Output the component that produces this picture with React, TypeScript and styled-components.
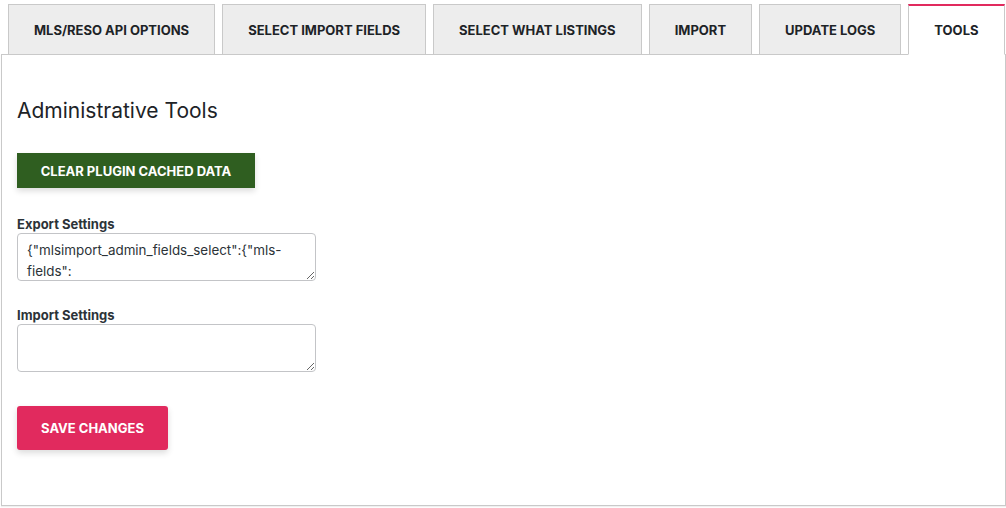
import React from "react";
import styled, { createGlobalStyle } from "styled-components";

const GlobalStyle = createGlobalStyle`
  html, body { margin: 0; padding: 0; background: #ffffff; }
  body { font-family: Inter, "Noto Sans", sans-serif; color: #1d2327; }
  * { box-sizing: border-box; }
`;

const Wrapper = styled.div`
  width: 1006px;
  height: 508px;
  padding: 4px 0 0 1px;
  display: flex;
  flex-direction: column;
  background: #ffffff;
`;

const TabBar = styled.nav`
  display: flex;
  padding-left: 7px;
  gap: 7px;
  margin-bottom: -1px;
  position: relative;
  z-index: 1;
`;

const Tab = styled.div<{ $active?: boolean }>`
  height: 51px;
  padding: 0 25px;
  display: flex;
  align-items: center;
  justify-content: center;
  font-family: Inter, sans-serif;
  font-size: 13px;
  font-weight: 700;
  color: #1d2327;
  text-transform: uppercase;
  white-space: nowrap;
  border: 1px solid #c9c9c9;
  border-top: ${(p) => (p.$active ? "2px solid #e12a5e" : "1px solid #c9c9c9")};
  border-bottom: ${(p) => (p.$active ? "1px solid #ffffff" : "1px solid #c9c9c9")};
  background: ${(p) => (p.$active ? "#ffffff" : "#ededed")};
`;

const Panel = styled.section`
  width: 1005px;
  flex: 1;
  border: 1px solid #c9c9c9;
  background: #ffffff;
  padding: 42px 15px 0;
  box-shadow: 0 1px 1px rgba(0, 0, 0, 0.06);
  margin-bottom: 2px;
`;

const Heading = styled.h2`
  margin: 0 0 28px;
  font-family: Inter, sans-serif;
  font-size: 21px;
  font-weight: 400;
  line-height: 28px;
  color: #1d2327;
`;

const ActionButton = styled.button<{ $variant: "green" | "pink" }>`
  display: inline-flex;
  align-items: center;
  justify-content: center;
  border: none;
  cursor: pointer;
  font-family: Inter, sans-serif;
  font-size: 13px;
  font-weight: 700;
  color: #ffffff;
  text-transform: uppercase;
  background: ${(p) => (p.$variant === "green" ? "#2f5e20" : "#e12a5e")};
  height: ${(p) => (p.$variant === "green" ? "35px" : "44px")};
  width: ${(p) => (p.$variant === "green" ? "238px" : "151px")};
  border-radius: ${(p) => (p.$variant === "green" ? "0" : "3px")};
  box-shadow: 0 3px 6px rgba(0, 0, 0, 0.14);
`;

const Field = styled.div`
  display: flex;
  flex-direction: column;
  gap: 1px;
`;

const Fields = styled.div`
  display: flex;
  flex-direction: column;
  gap: 26px;
  margin: 28px 0 34px;
`;

const Label = styled.label`
  font-family: Inter, sans-serif;
  font-size: 13px;
  font-weight: 700;
  line-height: 16px;
  color: #2c3338;
`;

const TextArea = styled.textarea`
  width: 299px;
  height: 48px;
  border: 1px solid #c3c4c7;
  border-radius: 4px;
  padding: 6px 9px 0;
  font-family: Inter, sans-serif;
  font-size: 13.4px;
  line-height: 21px;
  color: #2c3338;
  resize: vertical;
  background: #fff;
  overflow: hidden;
`;

const exportValue =
  '{"mlsimport_admin_fields_select":{"mls-fields":{"UnparsedAddress":"1","ListPrice":"1","StandardStatus":"1","PropertyType":"1"}}}';

export default function App() {
  const tabs = [
    "MLS/RESO API Options",
    "Select Import Fields",
    "Select What Listings",
    "Import",
    "Update Logs",
    "Tools",
  ];
  return (
    <>
      <GlobalStyle />
      <Wrapper>
        <TabBar>
          {tabs.map((t) => (
            <Tab key={t} $active={t === "Tools"}>
              {t}
            </Tab>
          ))}
        </TabBar>
        <Panel>
          <Heading>Administrative Tools</Heading>
          <ActionButton $variant="green">Clear Plugin Cached Data</ActionButton>
          <Fields>
            <Field>
              <Label>Export Settings</Label>
              <TextArea defaultValue={exportValue} />
            </Field>
            <Field>
              <Label>Import Settings</Label>
              <TextArea defaultValue="" />
            </Field>
          </Fields>
          <ActionButton $variant="pink">Save Changes</ActionButton>
        </Panel>
      </Wrapper>
    </>
  );
}
